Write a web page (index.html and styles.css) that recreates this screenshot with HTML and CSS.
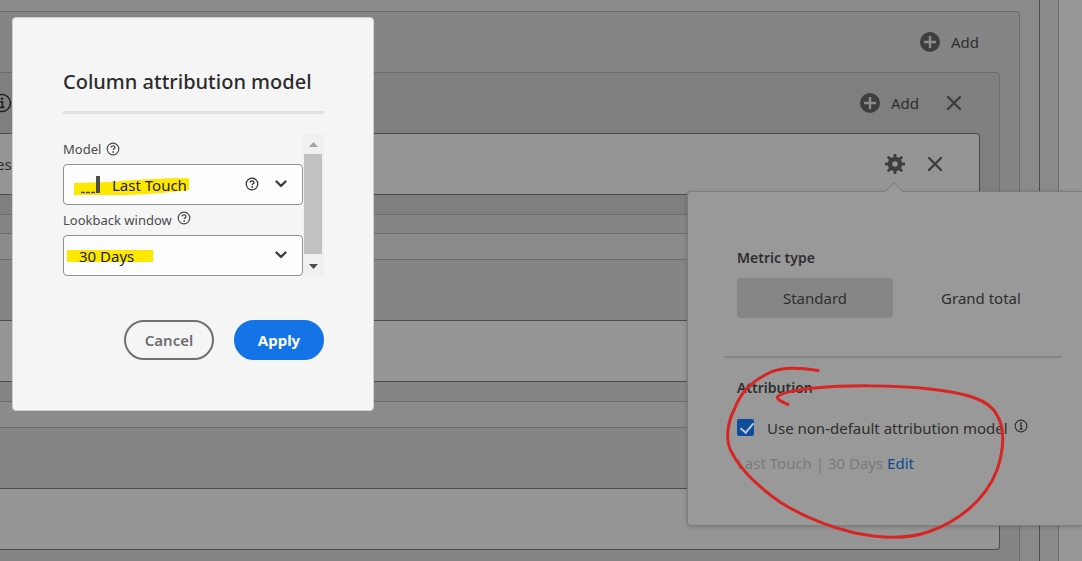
FILE: index.html
```
<!DOCTYPE html>
<html lang="en">
<head>
<meta charset="utf-8">
<title>Column attribution model</title>
<link rel="stylesheet" href="styles.css">
</head>
<body>
<svg class="defs" aria-hidden="true">
  <symbol id="plus" viewBox="0 0 20 20"><circle cx="10" cy="10" r="10" fill="#3e3e3e"/><path d="M10 4v12M4 10h12" stroke="#8c8c8c" stroke-width="2.4"/></symbol>
  <symbol id="cross" viewBox="0 0 16 16"><path d="M2 2l12 12M14 2L2 14" stroke="#3e3e3e" stroke-width="2.400" stroke-linecap="round"/></symbol>
  <symbol id="gear" viewBox="0 0 20 20"><g fill="none" stroke="#3e3e3e"><circle cx="10" cy="10" r="5" stroke-width="4.600"/><path d="M10 .5v4M10 15.500v4M.5 10h4M15.500 10h4M3.600 3.600l3 3M13.400 13.400l3 3M16.400 3.600l-3 3M6.600 13.400l-3 3" stroke-width="2.800" stroke-linecap="round"/></g></symbol>
  <symbol id="help" viewBox="0 0 14 14"><circle cx="7" cy="7" r="5.800" fill="none" stroke="currentColor" stroke-width="1.200"/><path d="M5.200 5.500c0-1 .8-1.700 1.800-1.700s1.900.6 1.900 1.600c0 1.200-1.700 1.300-1.700 2.700" fill="none" stroke="currentColor" stroke-width="1.300"/><circle cx="7.200" cy="9.900" r=".9" fill="currentColor"/></symbol>
  <symbol id="info" viewBox="0 0 14 14"><circle cx="7" cy="7" r="5.900" fill="none" stroke="currentColor" stroke-width="1.100"/><circle cx="7" cy="4" r=".9" fill="currentColor"/><path d="M5.700 6.200h1.600v3.800M5.500 10.100h3.200" fill="none" stroke="currentColor" stroke-width="1.200"/></symbol>
  <symbol id="chevron" viewBox="0 0 12 8"><path d="M1.500 1.500L6 6l4.500-4.500" fill="none" stroke="#3f3f3f" stroke-width="2.400" stroke-linecap="round" stroke-linejoin="round"/></symbol>
</svg>

<div class="workspace">
  <main class="canvas">
    <section class="group">
      <div class="bar bar-outer">
        <button class="add"><svg class="i20"><use href="#plus"/></svg>Add</button>
      </div>
      <div class="group subgroup">
        <div class="bar">
          <svg class="cut-info"><use href="#info"/></svg>
          <button class="add"><svg class="i20"><use href="#plus"/></svg>Add</button>
          <button class="icon-btn" aria-label="Remove group"><svg class="i16"><use href="#cross"/></svg></button>
        </div>
        <div class="card">
          <span class="cut-text">es</span>
          <button class="icon-btn" aria-label="Settings"><svg class="i20"><use href="#gear"/></svg></button>
          <button class="icon-btn" aria-label="Remove metric"><svg class="i16"><use href="#cross"/></svg></button>
        </div>
      </div>
    </section>
    <section class="group block"><div class="bar"></div><div class="card"></div></section>
    <section class="group block"><div class="bar"></div><div class="card"></div></section>
  </main>
  <div class="gutter"></div>
  <aside class="side"></aside>
</div>

<section class="popover">
  <div class="arrow"></div>
  <div class="pop-part">
    <h2 class="pop-title">Metric type</h2>
    <div class="segments">
      <button class="segment selected">Standard</button>
      <button class="segment">Grand total</button>
    </div>
  </div>
  <hr class="pop-rule">
  <div class="pop-part">
    <h2 class="pop-title">Attribution</h2>
    <div class="check-row">
      <input class="check" type="checkbox" id="nondefault" checked>
      <label for="nondefault">Use non-default attribution model</label>
      <svg class="i14 raised"><use href="#info"/></svg>
    </div>
    <p class="summary">Last Touch | 30 Days <a class="edit" href="#">Edit</a></p>
  </div>
  <svg class="marker" viewBox="720 360 290 185" aria-hidden="true">
    <path d="M818 370.500C798 367.500 784 367 771 372C750 382 741 392 734 410C727 424 726 440 730 449C740 471 760 488 780 502C805 518 830 527 855 533C880 538 905 540 928 532C955 523 985 502 997 470C1004 449 1005 429 997 415C989 399 965 393 930 389C895 385 845 385 815 388C795 390 780 393 777.500 397C777 400 782 402 788 404.500"/>
  </svg>
</section>

<section class="dialog" role="dialog" aria-labelledby="dialog-title">
  <h1 class="dialog-title" id="dialog-title">Column attribution model</h1>
  <div class="scroller">
    <div class="fields">
      <div class="label-row"><label for="model">Model</label><svg class="i14"><use href="#help"/></svg></div>
      <div class="field">
        <svg class="highlight" viewBox="0 0 238 38" aria-hidden="true"><path d="M10 18L45 17Q90 13 125 13V25Q95 29 62 30H10Z" fill="#ffe800"/><path d="M17 27.500h14" stroke="#4b4b4b" stroke-width="1.500" stroke-dasharray="4 1"/><path d="M34 11v17" stroke="#4b4b4b" stroke-width="4"/></svg>
        <select class="select with-icon" id="model"><option>Last Touch</option></select>
        <span class="field-icons"><svg class="i14"><use href="#help"/></svg><svg class="chev"><use href="#chevron"/></svg></span>
      </div>
      <div class="label-row"><label for="lookback">Lookback window</label><svg class="i14 raised"><use href="#help"/></svg></div>
      <div class="field">
        <svg class="highlight" viewBox="0 0 238 38" aria-hidden="true"><path d="M3 14h86v12H3z" fill="#ffe800"/></svg>
        <select class="select" id="lookback"><option>30 Days</option></select>
        <span class="field-icons"><svg class="chev"><use href="#chevron"/></svg></span>
      </div>
    </div>
    <div class="scrollbar" aria-hidden="true">
      <svg class="step" viewBox="0 0 20 20"><path d="M6 13l4.500-5 4.500 5z" fill="#a3a3a3"/></svg>
      <div class="thumb"></div>
      <svg class="step" viewBox="0 0 20 20"><path d="M6 8l4.500 5L15 8z" fill="#4b4b4b"/></svg>
    </div>
  </div>
  <div class="actions">
    <button class="action">Cancel</button>
    <button class="action primary">Apply</button>
  </div>
</section>
</body>
</html>
```

FILE: styles.css
```
* { box-sizing: border-box; }

body {
  margin: 0;
  height: 100vh;
  overflow: hidden;
  position: relative;
  background: #8b8b8b;
  color: #2e2e2e;
  font: 15px/20px "Noto Sans", "Open Sans", sans-serif;
}

button {
  border: 0;
  padding: 0;
  background: none;
  color: inherit;
  font: inherit;
}

svg { display: block; flex: none; }
.defs { position: absolute; width: 0; height: 0; }
.i14 { width: 14px; height: 14px; }
.i16 { width: 16px; height: 16px; }
.i20 { width: 20px; height: 20px; }
.raised { margin-bottom: 4px; }

.workspace { display: flex; height: 100%; overflow: hidden; }
.canvas {
  flex: 1;
  display: flex;
  flex-direction: column;
  gap: 25px;
  padding: 11px 19px 0 0;
  border-right: 1px solid #4c4c4c;
}
.gutter { width: 18px; }
.side {
  width: 24px;
  border-left: 1px solid #6c6c6c;
  background: #979797;
}

.group {
  flex: none;
  padding: 0 19px 18px 0;
  border: 1px solid #6c6c6c;
  border-left: 0;
  border-radius: 0 4px 4px 0;
  background: #858585;
}
.subgroup, .block { padding-bottom: 19px; }
.subgroup { background: #7f7f7f; }

.bar {
  display: flex;
  align-items: center;
  justify-content: flex-end;
  gap: 27px;
  height: 60px;
  padding-right: 18px;
}
.bar-outer { padding-right: 21px; }
.add { display: flex; align-items: center; gap: 11px; }
.cut-info {
  width: 20px;
  height: 20px;
  margin: 0 auto 0 -8px;
  color: #222;
}

.card {
  display: flex;
  align-items: center;
  gap: 22px;
  height: 62px;
  padding-right: 36px;
  border: 1px solid #4c4c4c;
  border-left: 0;
  border-radius: 0 4px 4px 0;
  background: #959595;
}
.cut-text { margin: 0 auto 0 -4px; }

.popover {
  position: absolute;
  top: 191px;
  right: 0;
  width: 395px;
  padding: 56px 20px 52px 36px;
  border: 1px solid #7d7d7d;
  border-right: 0;
  border-radius: 4px 0 0 4px;
  background: #999;
  box-shadow: 0 1px 4px rgba(0, 0, 0, 0.2);
}
.arrow {
  position: absolute;
  top: -7px;
  left: 199px;
  width: 14px;
  height: 14px;
  border: 1px solid #7d7d7d;
  border-right: 0;
  border-bottom: 0;
  background: #999;
  transform: rotate(45deg);
}
.pop-part { padding: 0 3px 0 13px; }
.pop-title { margin: 0; font-size: 14px; font-weight: 600; }
.segments {
  display: grid;
  grid-template-columns: 1fr 1fr;
  gap: 10px;
  margin-top: 10px;
}
.segment { height: 40px; border-radius: 4px; }
.selected { background: #868686; }
.pop-rule {
  height: 2px;
  margin: 38px 0 20px;
  border: 0;
  background: #858585;
}
.check-row { display: flex; align-items: center; margin-top: 20px; gap: 6px; }
.check {
  appearance: none;
  width: 17px;
  height: 17px;
  margin: 0 7px 2px 0;
  border-radius: 2px;
  background: #0d4d9c;
}
.check::before {
  content: "";
  display: block;
  width: 6px;
  height: 11px;
  margin: 1px 0 0 6px;
  border: solid #b8c6d8;
  border-width: 0 2px 2px 0;
  transform: rotate(40deg);
}
.summary { margin: 15px 0 0; color: #7a7a7a; }
.edit { color: #0b4a94; text-decoration: none; }
.marker {
  position: absolute;
  top: 168px;
  left: 32px;
  width: 290px;
  height: 185px;
  fill: none;
  stroke: #d92424;
  stroke-width: 3;
  stroke-linecap: round;
}

.dialog {
  position: absolute;
  top: 17px;
  left: 12px;
  width: 362px;
  padding: 50px 49px 50px 50px;
  border: 1px solid #d0d0d0;
  border-radius: 4px;
  background: #f5f5f5;
}
.dialog-title {
  margin: 0;
  padding-bottom: 15px;
  border-bottom: 3px solid #e1e1e1;
  color: #2c2c2c;
  font-size: 20px;
  font-weight: 500;
  line-height: 28px;
  white-space: nowrap;
}
.scroller { display: flex; margin-top: 20px; }
.fields { width: 240px; }
.label-row {
  display: flex;
  align-items: center;
  gap: 5px;
  height: 30px;
  color: #4b4b4b;
  font-size: 13px;
}
.field {
  position: relative;
  display: flex;
  height: 41px;
  border: 1px solid #909090;
  border-radius: 4px;
  background: #fdfdfd;
}
.highlight { position: absolute; top: 0; left: 0; width: 238px; height: 38px; }
.select {
  position: relative;
  appearance: none;
  width: 100%;
  border: 0;
  padding: 0 60px 0 15px;
  background: transparent;
  color: #222;
  font: inherit;
}
.with-icon { padding-left: 48px; }
.field-icons {
  position: absolute;
  top: 12px;
  right: 15px;
  display: flex;
  align-items: center;
  gap: 16px;
  height: 14px;
  pointer-events: none;
}
.chev { width: 12px; height: 8px; }
.scrollbar {
  flex: 1;
  display: flex;
  flex-direction: column;
  background: #f0f0f0;
}
.step { width: 20px; height: 20px; }
.thumb { flex: 1; margin: 0 2px 2px 1px; background: #c1c1c1; }
.actions { display: flex; justify-content: flex-end; gap: 20px; margin-top: 44px; }
.action {
  width: 90px;
  height: 40px;
  border: 2px solid #707070;
  border-radius: 20px;
  color: #6e6e6e;
  font-weight: 600;
}
.primary { border-color: #1473e6; background: #1473e6; color: #fff; font-weight: 700; }
```
